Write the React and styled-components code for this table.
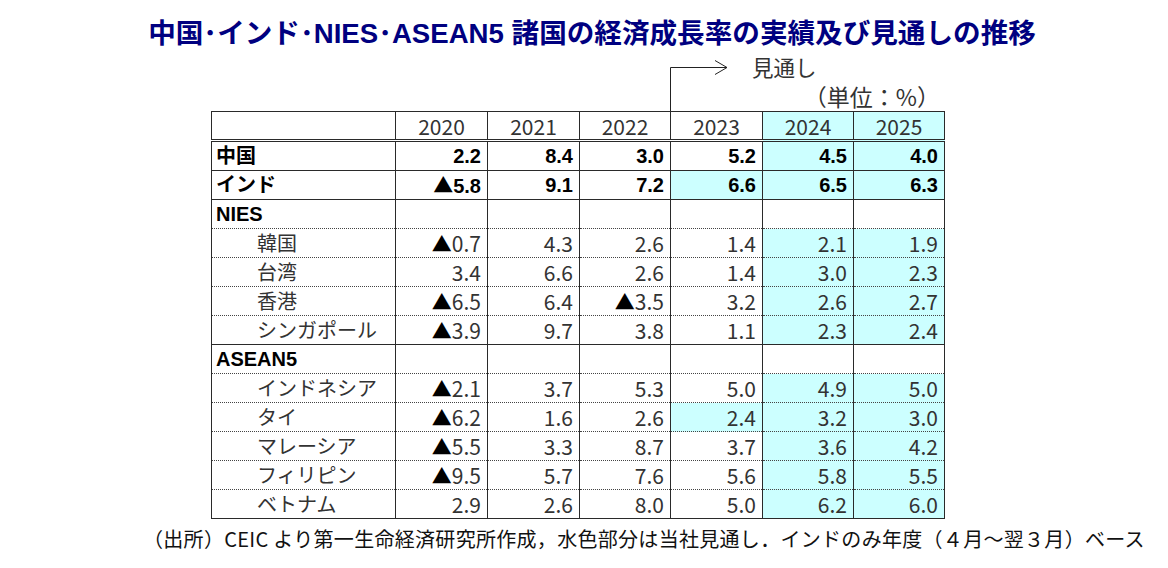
import React from "react";
import styled, { createGlobalStyle } from "styled-components";

const Global = createGlobalStyle`
  html, body { margin: 0; padding: 0; background: #fff; }
  body { font-family: "Noto Sans CJK JP", "Liberation Sans", sans-serif; }
`;

const Page = styled.div`
  width: 1168px;
  height: 568px;
  display: flex;
  flex-direction: column;
  box-sizing: border-box;
  padding-top: 17px;
`;

const Title = styled.h1`
  margin: 0;
  height: 38px;
  text-align: center;
  font-family: "Liberation Sans", "Noto Sans CJK JP", sans-serif;
  font-weight: 700;
  font-size: 27.6px;
  line-height: 34px;
  color: #000080;
  padding-left: 16px;
  white-space: nowrap;
`;

const Block = styled.div`
  margin-left: 211px;
  width: 733px;
  display: flex;
  flex-direction: column;
`;

const Annot = styled.div`
  display: grid;
  grid-template-columns: 459px 82px 1fr;
  grid-template-rows: 28px 28px;
  height: 56px;
  color: #333;
`;

const ArrowCell = styled.svg`
  grid-column: 2;
  grid-row: 1 / span 2;
  display: block;
`;

const Forecast = styled.div`
  grid-column: 3;
  grid-row: 1;
  font-size: 21.5px;
  line-height: 24px;
`;

const Unit = styled.div`
  grid-column: 3;
  grid-row: 2;
  align-self: start;
  margin-top: 1px;
  text-align: right;
  padding-right: 4px;
  font-size: 23px;
  line-height: 24px;
  white-space: nowrap;
`;

const Table = styled.table`
  border-collapse: collapse;
  table-layout: fixed;
  width: 733px;
  border: 1px solid #2a2a2a;
`;

const HeadCell = styled.th`
  height: 27px;
  padding: 0;
  font-weight: 400;
  font-size: 21px;
  line-height: 24px;
  color: #333;
  text-align: center;
  border-left: 1px solid #2a2a2a;
  border-bottom: 3px double #2a2a2a;
  background: ${(p) => (p.$hl ? "#ccffff" : "#fff")};
`;

const Row = styled.tr``;

const Label = styled.td`
  height: 28px;
  padding: 0 0 0 ${(p) => (p.$sub ? "45px" : "4px")};
  font-size: 20px;
  line-height: 24px;
  font-family: ${(p) =>
    p.$bold
      ? `"Liberation Sans", "Noto Sans CJK JP", sans-serif`
      : `"Noto Sans CJK JP", sans-serif`};
  font-weight: ${(p) => (p.$bold ? 700 : 400)};
  color: ${(p) => (p.$bold ? "#000" : "#333")};
  border-left: 1px solid #2a2a2a;
  border-bottom: 1px ${(p) => p.$line} ${(p) => (p.$line === "dotted" ? "#444" : "#2a2a2a")};
  white-space: nowrap;
`;

const Num = styled.td`
  height: 28px;
  padding: 0 6px 0 0;
  text-align: right;
  font-size: ${(p) => (p.$bold ? "20px" : "21px")};
  line-height: 24px;
  font-family: ${(p) =>
    p.$bold
      ? `"Liberation Sans", "Noto Sans CJK JP", sans-serif`
      : `"Noto Sans CJK JP", sans-serif`};
  font-weight: ${(p) => (p.$bold ? 700 : 400)};
  color: ${(p) => (p.$bold ? "#000" : "#333")};
  background: ${(p) => (p.$hl ? "#ccffff" : "#fff")};
  border-left: 1px solid #2a2a2a;
  border-bottom: 1px ${(p) => p.$line} ${(p) => (p.$line === "dotted" ? "#444" : "#2a2a2a")};
  white-space: nowrap;
`;

const Tri = styled.span`
  font-family: "Noto Sans CJK JP", sans-serif;
  font-weight: 400;
  font-size: 20px;
  color: #000;
`;

const Note = styled.p`
  margin: 2px 0 0 0;
  padding-left: 143px;
  font-size: 20px;
  letter-spacing: 0.3px;
  line-height: 36px;
  color: #111;
  white-space: nowrap;
`;

const years = ["2020", "2021", "2022", "2023", "2024", "2025"];

const rows = [
  { label: "中国", bold: true, vals: ["2.2", "8.4", "3.0", "5.2", "4.5", "4.0"], hl: 4, line: "solid" },
  { label: "インド", bold: true, vals: ["▲5.8", "9.1", "7.2", "6.6", "6.5", "6.3"], hl: 3, line: "solid" },
  { label: "NIES", bold: true, vals: ["", "", "", "", "", ""], hl: 9, line: "dotted" },
  { label: "韓国", sub: true, vals: ["▲0.7", "4.3", "2.6", "1.4", "2.1", "1.9"], hl: 4, line: "dotted" },
  { label: "台湾", sub: true, vals: ["3.4", "6.6", "2.6", "1.4", "3.0", "2.3"], hl: 4, line: "dotted" },
  { label: "香港", sub: true, vals: ["▲6.5", "6.4", "▲3.5", "3.2", "2.6", "2.7"], hl: 4, line: "dotted" },
  { label: "シンガポール", sub: true, vals: ["▲3.9", "9.7", "3.8", "1.1", "2.3", "2.4"], hl: 4, line: "solid" },
  { label: "ASEAN5", bold: true, vals: ["", "", "", "", "", ""], hl: 9, line: "dotted" },
  { label: "インドネシア", sub: true, vals: ["▲2.1", "3.7", "5.3", "5.0", "4.9", "5.0"], hl: 4, line: "dotted" },
  { label: "タイ", sub: true, vals: ["▲6.2", "1.6", "2.6", "2.4", "3.2", "3.0"], hl: 3, line: "dotted" },
  { label: "マレーシア", sub: true, vals: ["▲5.5", "3.3", "8.7", "3.7", "3.6", "4.2"], hl: 4, line: "dotted" },
  { label: "フィリピン", sub: true, vals: ["▲9.5", "5.7", "7.6", "5.6", "5.8", "5.5"], hl: 4, line: "dotted" },
  { label: "ベトナム", sub: true, vals: ["2.9", "2.6", "8.0", "5.0", "6.2", "6.0"], hl: 4, line: "solid" },
];

function Value({ v }) {
  if (v.startsWith("▲")) {
    return (
      <>
        <Tri>▲</Tri>
        {v.slice(1)}
      </>
    );
  }
  return v;
}

export default function App() {
  return (
    <Page>
      <Global />
      <Title>中国･インド･NIES･ASEAN5 諸国の経済成長率の実績及び見通しの推移</Title>
      <Block>
        <Annot>
          <ArrowCell width="82" height="56" viewBox="0 0 82 56">
            <polyline points="0.5,56 0.5,12.5 57,12.5" fill="none" stroke="#222" strokeWidth="1" />
            <polyline points="45,5.5 57,12.5 45,19.5" fill="none" stroke="#222" strokeWidth="1" />
          </ArrowCell>
          <Forecast>見通し</Forecast>
          <Unit>（単位：%）</Unit>
        </Annot>
        <Table>
          <colgroup>
            <col style={{ width: "184px" }} />
            <col style={{ width: "92px" }} />
            <col style={{ width: "92px" }} />
            <col style={{ width: "91px" }} />
            <col style={{ width: "92px" }} />
            <col style={{ width: "91px" }} />
            <col style={{ width: "91px" }} />
          </colgroup>
          <thead>
            <tr>
              <HeadCell />
              {years.map((y, i) => (
                <HeadCell key={y} $hl={i >= 4}>
                  {y}
                </HeadCell>
              ))}
            </tr>
          </thead>
          <tbody>
            {rows.map((r) => (
              <Row key={r.label}>
                <Label $bold={r.bold} $sub={r.sub} $line={r.line}>
                  {r.label}
                </Label>
                {r.vals.map((v, i) => (
                  <Num key={i} $bold={r.bold} $hl={i >= r.hl} $line={r.line}>
                    <Value v={v} />
                  </Num>
                ))}
              </Row>
            ))}
          </tbody>
        </Table>
      </Block>
      <Note>（出所）CEIC より第一生命経済研究所作成，水色部分は当社見通し．インドのみ年度（４月～翌３月）ベース</Note>
    </Page>
  );
}
